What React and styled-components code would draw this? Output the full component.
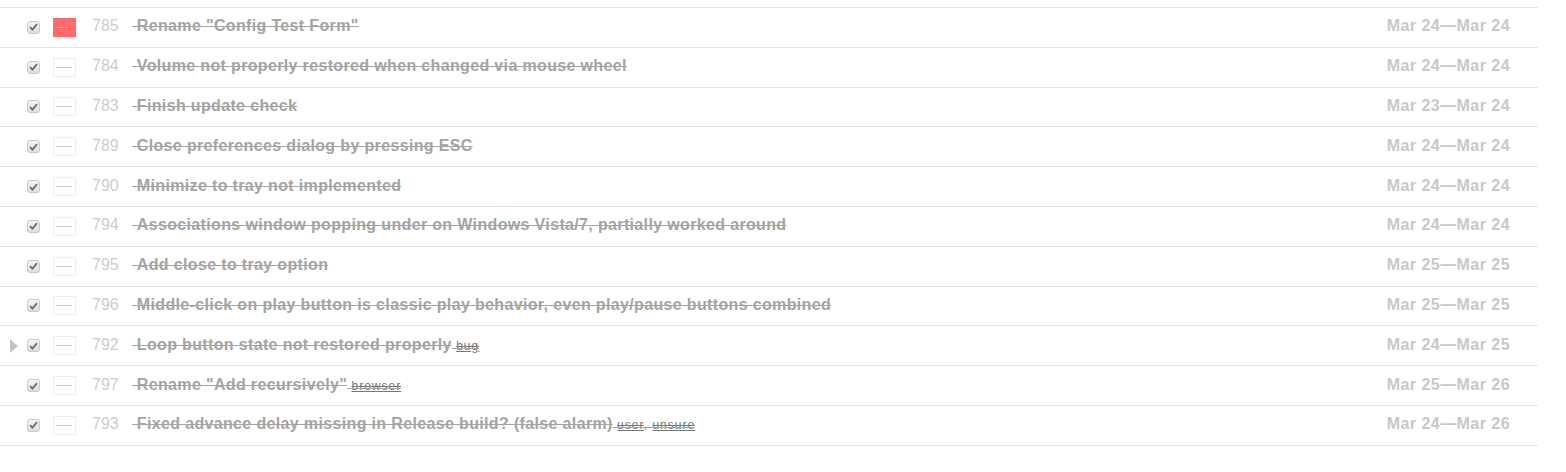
import React from "react";
import styled, { createGlobalStyle } from "styled-components";

const GlobalStyle = createGlobalStyle`
  body {
    margin: 0;
    background: #fff;
    font-family: "Liberation Sans", Arial, sans-serif;
  }
`;

const tasks = [
  { id: 785, title: 'Rename "Config Test Form"', from: "Mar 24", to: "Mar 24", color: "#ff6b6b" },
  { id: 784, title: "Volume not properly restored when changed via mouse wheel", from: "Mar 24", to: "Mar 24" },
  { id: 783, title: "Finish update check", from: "Mar 23", to: "Mar 24" },
  { id: 789, title: "Close preferences dialog by pressing ESC", from: "Mar 24", to: "Mar 24" },
  { id: 790, title: "Minimize to tray not implemented", from: "Mar 24", to: "Mar 24" },
  { id: 794, title: "Associations window popping under on Windows Vista/7, partially worked around", from: "Mar 24", to: "Mar 24" },
  { id: 795, title: "Add close to tray option", from: "Mar 25", to: "Mar 25" },
  { id: 796, title: "Middle-click on play button is classic play behavior, even play/pause buttons combined", from: "Mar 25", to: "Mar 25" },
  { id: 792, title: "Loop button state not restored properly", from: "Mar 24", to: "Mar 25", tags: ["bug"], expandable: true },
  { id: 797, title: 'Rename "Add recursively"', from: "Mar 25", to: "Mar 26", tags: ["browser"] },
  { id: 793, title: "Fixed advance delay missing in Release build? (false alarm)", from: "Mar 24", to: "Mar 26", tags: ["user", "unsure"] },
];

export default function App() {
  return (
    <>
      <GlobalStyle />
      <Page>
        <List>
          {tasks.map((t) => (
            <Row key={t.id}>
              <Expander>{t.expandable && <Arrow />}</Expander>
              <Check>
                <svg width="9" height="8" viewBox="0 0 9 8">
                  <path d="M1 4.2 L3.4 6.6 L8 1.2" fill="none" stroke="#6d6d6d" strokeWidth="1.8" />
                </svg>
              </Check>
              <Swatch $color={t.color} />
              <Num>{t.id}</Num>
              <Title>
                {"\u00a0" + t.title}
                {t.tags && (
                  <Tags>
                    {"\u00a0"}
                    {t.tags.map((tag, i) => (
                      <React.Fragment key={tag}>
                        {i > 0 && ", "}
                        <Tag>{tag}</Tag>
                      </React.Fragment>
                    ))}
                  </Tags>
                )}
              </Title>
              <Dates>
                {t.from}—{t.to}
              </Dates>
            </Row>
          ))}
        </List>
      </Page>
    </>
  );
}

const Page = styled.div`
  padding-top: 7px;
  width: 1538px;
`;

const List = styled.div`
  border-top: 1px solid #e3e3e3;
`;

const Row = styled.div`
  display: flex;
  align-items: center;
  height: 39.8px;
  box-sizing: border-box;
  border-bottom: 1px solid #e3e3e3;
`;

const Expander = styled.div`
  width: 27px;
  display: flex;
  align-items: center;
  padding-left: 10px;
  box-sizing: border-box;
`;

const Arrow = styled.span`
  width: 0;
  height: 0;
  border-top: 7px solid transparent;
  border-bottom: 7px solid transparent;
  border-left: 8px solid #c4c4c4;
`;

const Check = styled.span`
  width: 13px;
  height: 13px;
  box-sizing: border-box;
  border: 1px solid #c9c9c9;
  border-radius: 3px;
  background: linear-gradient(#f4f4f4, #dedede);
  display: flex;
  align-items: center;
  justify-content: center;
`;

const Swatch = styled.span`
  position: relative;
  width: 23px;
  height: 19px;
  margin-left: 13px;
  box-sizing: border-box;
  background: ${(p) => p.$color || "#fff"};
  border: 1px solid ${(p) => p.$color || "#eeeeee"};
  &::after {
    content: "";
    position: absolute;
    left: 2px;
    right: 3px;
    top: 8px;
    height: 1px;
    background: ${(p) => (p.$color ? "#ff9c9c" : "#c8c8c8")};
  }
`;

const Num = styled.span`
  margin-left: 16px;
  margin-top: -2px;
  font-size: 16px;
  color: #cccccc;
  width: 28px;
`;

const Title = styled.span`
  margin-left: 12px;
  margin-top: -2px;
  font-size: 16px;
  font-weight: bold;
  letter-spacing: 0.35px;
  color: #a4a4a4;
  text-decoration: line-through;
  flex: 1;
  white-space: nowrap;
`;

const Tags = styled.span`
  font-size: 12px;
  font-weight: normal;
  letter-spacing: 1px;
  color: #777;
`;

const Tag = styled.span`
  text-decoration: underline line-through;
`;

const Dates = styled.span`
  margin-top: -2px;
  font-size: 16px;
  font-weight: bold;
  letter-spacing: 0.45px;
  color: #c8c8c8;
  padding-right: 28px;
  white-space: nowrap;
`;
